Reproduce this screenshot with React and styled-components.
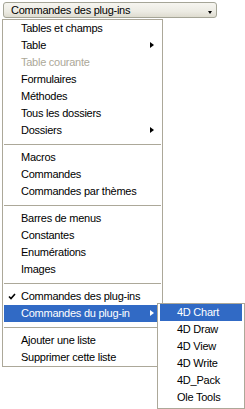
import styled, { createGlobalStyle } from "styled-components";

const GlobalStyle = createGlobalStyle`
  body {
    margin: 0;
    background: #ffffff;
    font-family: "Liberation Sans", Arial, sans-serif;
    font-size: 11px;
    color: #000000;
  }
`;

const StyledPage = styled.div`
  width: 245px;
  height: 409px;
  overflow: hidden;
  display: flex;
  flex-direction: column;
  align-items: flex-start;
`;

const ComboButton = styled.div`
  box-sizing: border-box;
  margin: 2px 0 0 3px;
  width: 214px;
  height: 16px;
  border: 1px solid #a5a597;
  border-radius: 3px;
  background: linear-gradient(180deg, #f6f5f0 0%, #ecebe3 60%, #dedcd0 100%);
  display: flex;
  align-items: center;
  justify-content: space-between;
  padding: 0 4px 0 7px;
  letter-spacing: -0.25px;
  line-height: 14px;
`;

const DownArrow = styled.span`
  width: 0;
  height: 0;
  margin-top: 5px;
  border-left: 2.5px solid transparent;
  border-right: 2.5px solid transparent;
  border-top: 3px solid #000;
`;

const Menu = styled.div`
  position: relative;
  box-sizing: border-box;
  margin: ${(p) => p.$margin || "0"};
  width: ${(p) => p.$width}px;
  border: 1px solid #aca899;
  background: #ffffff;
  padding: ${(p) => p.$padding || "0 1px"};
  display: flex;
  flex-direction: column;
`;

const Item = styled.div`
  position: relative;
  height: 17px;
  line-height: 17px;
  padding-left: ${(p) => p.$indent || 17}px;
  letter-spacing: -0.25px;
  white-space: nowrap;
  color: ${(p) => (p.$active ? "#ffffff" : p.$disabled ? "#aca899" : "#000000")};
  background: ${(p) => (p.$active ? "#316ac5" : "transparent")};
`;

const Check = styled.svg`
  position: absolute;
  left: 4px;
  top: 5px;
`;

const SubArrow = styled.span`
  position: absolute;
  right: 7px;
  top: 5px;
  width: 0;
  height: 0;
  border-top: 3.5px solid transparent;
  border-bottom: 3.5px solid transparent;
  border-left: 4px solid ${(p) => (p.$active ? "#ffffff" : "#000000")};
`;

const Separator = styled.div`
  height: 10px;
  display: flex;
  align-items: center;
  &::after {
    content: "";
    flex: 1;
    height: 0;
    border-top: 1px solid #aca899;
  }
`;

const SubMenuWrap = styled.div`
  position: absolute;
  left: 153px;
  top: -2px;
  z-index: 2;
`;

const groups = [
  [
    { label: "Tables et champs" },
    { label: "Table", sub: true },
    { label: "Table courante", disabled: true },
    { label: "Formulaires" },
    { label: "Méthodes" },
    { label: "Tous les dossiers" },
    { label: "Dossiers", sub: true },
  ],
  [{ label: "Macros" }, { label: "Commandes" }, { label: "Commandes par thèmes" }],
  [
    { label: "Barres de menus" },
    { label: "Constantes" },
    { label: "Enumérations" },
    { label: "Images" },
  ],
  [
    { label: "Commandes des plug-ins", checked: true },
    { label: "Commandes du plug-in", sub: true, active: true, open: true },
  ],
  [{ label: "Ajouter une liste" }, { label: "Supprimer cette liste" }],
];

const plugins = ["4D Chart", "4D Draw", "4D View", "4D Write", "4D_Pack", "Ole Tools"];

function SubMenu() {
  return (
    <SubMenuWrap>
      <Menu $width={88} $padding="0 2px 2px 2px">
        {plugins.map((p, i) => (
          <Item key={p} $active={i === 0} $indent={17}>
            {p}
          </Item>
        ))}
      </Menu>
    </SubMenuWrap>
  );
}

export default function App() {
  return (
    <StyledPage>
      <GlobalStyle />
      <ComboButton>
        <span>Commandes des plug-ins</span>
        <DownArrow />
      </ComboButton>
      <Menu $width={161} $margin="1px 0 0 2px">
        {groups.map((g, gi) => (
          <div key={gi}>
            {gi > 0 && <Separator />}
            {g.map((it) => (
              <Item key={it.label} $active={it.active} $disabled={it.disabled}>
                {it.checked && (
                  <Check width="8" height="8" viewBox="0 0 8 8">
                    <path d="M1 3.5 L3 5.5 L7 1" stroke="#000" strokeWidth="1.6" fill="none" />
                  </Check>
                )}
                {it.label}
                {it.sub && <SubArrow $active={it.active} />}
                {it.open && <SubMenu />}
              </Item>
            ))}
          </div>
        ))}
      </Menu>
    </StyledPage>
  );
}
